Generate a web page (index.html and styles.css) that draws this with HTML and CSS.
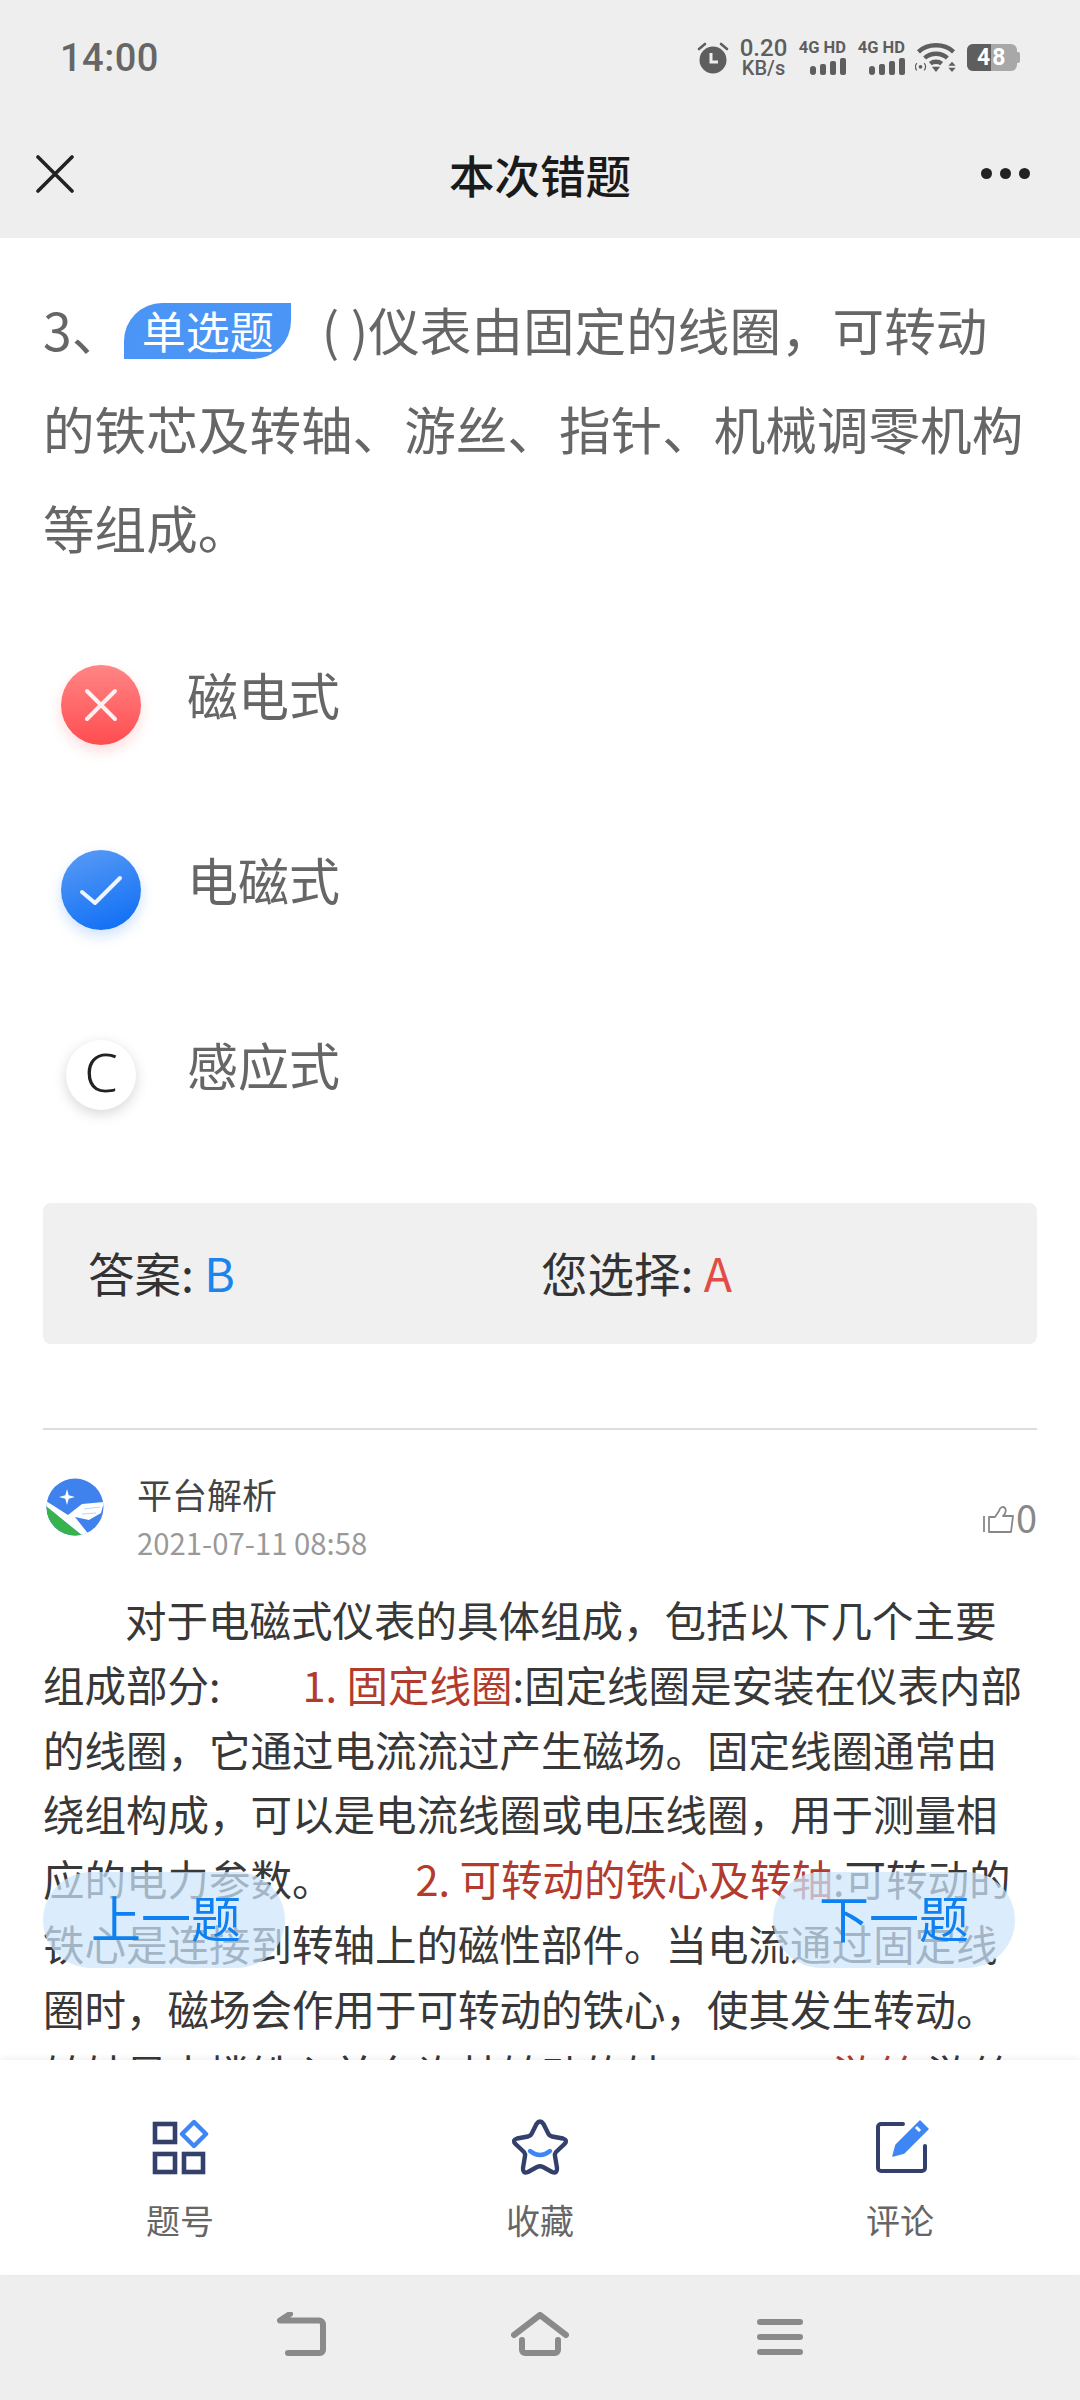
FILE: index.html
```html
<!DOCTYPE html>
<html lang="zh">
<head>
<meta charset="utf-8">
<title>本次错题</title>
<link rel="stylesheet" href="styles.css">
</head>
<body>
<div class="phone">
  <div class="status">
    <span class="time">14:00</span>
    <div class="status-right">
      <svg class="alarm" width="32" height="32" viewBox="0 0 32 32"><path d="M2 7l6-5M30 7l-6-5" stroke="#5e5e5e" stroke-width="2.6" stroke-linecap="round"/><circle cx="16" cy="18" r="13.5" fill="#5e5e5e"/><path d="M14 11v9h7" fill="none" stroke="#eee" stroke-width="3"/></svg>
      <div class="speed"><span>0.20</span><span class="kb">KB/s</span></div>
      <div class="net"><span>4G HD</span><svg width="36" height="17" viewBox="0 0 36 17"><rect x="0" y="8" width="6" height="9" rx="3" fill="#5e5e5e"/><rect x="10" y="6" width="6" height="11" rx="2" fill="#5e5e5e"/><rect x="20" y="3" width="6" height="14" rx="2" fill="#5e5e5e"/><rect x="30" y="0" width="6" height="17" rx="2" fill="#5e5e5e"/></svg></div>
      <div class="net"><span>4G HD</span><svg width="36" height="17" viewBox="0 0 36 17"><rect x="0" y="8" width="6" height="9" rx="3" fill="#5e5e5e"/><rect x="10" y="6" width="6" height="11" rx="2" fill="#5e5e5e"/><rect x="20" y="3" width="6" height="14" rx="2" fill="#5e5e5e"/><rect x="30" y="0" width="6" height="17" rx="2" fill="#5e5e5e"/></svg></div>
      <svg class="wifi" width="42" height="31" viewBox="0 0 40 30"><g fill="none" stroke="#5e5e5e" stroke-width="4.2"><path d="M3 9.5C12 1 28 1 37 9.5"/><path d="M9 15.5C15 10 25 10 31 15.5"/><path d="M14.5 21C17.5 18.5 22.5 18.5 25.5 21"/></g><path d="M16 24h8l-4 5z" fill="#5e5e5e"/><path d="M32 23l3.5-4 3.500 4zM32 25h7l-3.500 4z" fill="#5e5e5e"/><circle cx="5" cy="24" r="1.8" fill="#5e5e5e"/><path d="M1.500 20.500a5 5 0 0 0 0 7M8.500 20.500a5 5 0 0 1 0 7" fill="none" stroke="#5e5e5e" stroke-width="1.2"/></svg>
      <div class="battery"><span class="battery-fill"></span><span class="battery-num">48</span></div>
    </div>
  </div>
  <header class="topbar">
    <svg class="close" width="38" height="38" viewBox="0 0 38 38"><path d="M2 2l34 34M36 2L2 36" stroke="#222" stroke-width="3.6" stroke-linecap="round"/></svg>
    <h1 class="title">本次错题</h1>
    <div class="dots"><i></i><i></i><i></i></div>
  </header>
  <main class="content">
    <p class="question">3、<span class="tag">单选题</span> ( )仪表由固定的线圈，可转动的铁芯及转轴、游丝、指针、机械调零机构等组成。</p>
    <ul class="options">
      <li class="option"><span class="mark wrong"><svg width="36" height="36" viewBox="0 0 36 36"><path d="M4 4l28 28M32 4L4 32" stroke="#fff" stroke-opacity=".9" stroke-width="4" stroke-linecap="round"/></svg></span><span>磁电式</span></li>
      <li class="option"><span class="mark right"><svg width="44" height="34" viewBox="0 0 44 34"><path d="M3 19l13 11L41 5" fill="none" stroke="#fff" stroke-opacity=".92" stroke-width="4" stroke-linecap="round" stroke-linejoin="round"/></svg></span><span>电磁式</span></li>
      <li class="option"><span class="mark plain">C</span><span>感应式</span></li>
    </ul>
    <div class="answer">
      <div class="answer-cell">答案: <b class="blue">B</b></div>
      <div class="answer-cell">您选择: <b class="red">A</b></div>
    </div>
    <hr class="rule">
    <div class="author">
      <svg class="logo" width="58" height="58" viewBox="0 0 58 58"><defs><clipPath id="logo-clip"><circle cx="29" cy="29" r="28.5"/></clipPath></defs><g clip-path="url(#logo-clip)"><rect width="58" height="58" fill="#3f82ee"/><path d="M0 28L37 58H0z" fill="#38b24d"/><path d="M0 23L22 37 36 26 58 24 55 35 43 42 29 39 44 58H37L0 28z" fill="#fff"/><path d="M38 31L54 29M36 36L50 35" stroke="#bcd4f8" stroke-width="1"/></g><path d="M21 11l1.700 6.300L29 19l-6.300 1.700L21 27l-1.700-6.300L13 19l6.300-1.700z" fill="#fff"/></svg>
      <div class="author-text">
        <div class="author-name">平台解析</div>
        <div class="author-date">2021-07-11 08:58</div>
      </div>
      <div class="like">
        <svg width="31" height="28" viewBox="0 0 31 28"><path d="M1 10v16M6 26V11h6l4-6c1-4 4-5 6-3 1.500 2 .5 6-2 8h10l-2 16z" fill="none" stroke="#888" stroke-width="1.8" stroke-linejoin="round"/></svg><span>0</span>
      </div>
    </div>
    <div class="analysis"><span class="gap"></span>对于电磁式仪表的具体组成，包括以下几个主要组成部分:<span class="gap"></span><em>1. 固定线圈</em>:固定线圈是安装在仪表内部的线圈，它通过电流流过产生磁场。固定线圈通常由绕组构成，可以是电流线圈或电压线圈，用于测量相应的电力参数。<span class="gap"></span><em>2. 可转动的铁心及转轴</em>:可转动的铁心是连接到转轴上的磁性部件。当电流通过固定线圈时，磁场会作用于可转动的铁心，使其发生转动。转轴是支撑铁心并允许其转动的轴。<span class="gap"></span><em>3. 游丝</em>:游丝</div>
    <button class="float prev">上一题</button>
    <button class="float next">下一题</button>
  </main>
  <nav class="tabs">
    <div class="tab">
      <svg width="58" height="58" viewBox="0 0 58 58"><g fill="none" stroke="#33406b" stroke-width="4.6"><rect x="4" y="6" width="20" height="18"/><rect x="4" y="36" width="20" height="18"/><rect x="33" y="36" width="19" height="18"/></g><path d="M43 4l12 12-12 12-12-12z" fill="none" stroke="#3f86f5" stroke-width="4.4" stroke-linejoin="round"/></svg>
      <span>题号</span>
    </div>
    <div class="tab">
      <svg width="60" height="58" viewBox="0 0 60 58"><path d="M26.500 6Q30 1 33.500 6L38.500 16Q39.500 18 42 18.500L53 20.500Q58 22 54.500 26L46 34Q44.500 36 45 38L47 50Q47.500 56 42 54L33 49Q30 47.500 27 49L18 54Q12.500 56 13 50L15 38Q15.500 36 14 34L5.500 26Q2 22 7 20.500L18 18.500Q20.500 18 21.500 16Z" fill="none" stroke="#33406b" stroke-width="4.4" stroke-linejoin="round"/><path d="M20 33Q30 41 40 33" fill="none" stroke="#3f86f5" stroke-width="4.4" stroke-linecap="round"/></svg>
      <span>收藏</span>
    </div>
    <div class="tab">
      <svg width="58" height="58" viewBox="0 0 58 58"><path d="M32 6H10a3 3 0 0 0-3 3v41a3 3 0 0 0 3 3h41a3 3 0 0 0 3-3V28" fill="none" stroke="#33406b" stroke-width="4" stroke-linecap="round"/><path d="M22 38L25 27 49 3 57 11 33 35z" fill="#3f86f5" stroke="#3f86f5" stroke-width="1.5" stroke-linejoin="round"/><path d="M45 9l4 4" stroke="#fff" stroke-width="3"/></svg>
      <span>评论</span>
    </div>
  </nav>
  <footer class="sysnav">
    <svg width="50" height="44" viewBox="0 0 50 44"><path d="M13 2L3 8.500h39a4 4 0 0 1 4 4V38a3 3 0 0 1-3 3H11" fill="none" stroke="#8a8a8a" stroke-width="6" stroke-linecap="round" stroke-linejoin="round"/></svg>
    <svg class="home" width="58" height="44" viewBox="0 0 58 44"><path d="M3 23L29 3l26 20" fill="none" stroke="#8a8a8a" stroke-width="6" stroke-linecap="round" stroke-linejoin="round"/><path d="M11 28v10a3 3 0 0 0 3 3h30a3 3 0 0 0 3-3V28" fill="none" stroke="#8a8a8a" stroke-width="6" stroke-linecap="round"/></svg>
    <svg class="menu" width="46" height="36" viewBox="0 0 46 36"><path d="M3 3h40M3 18h40M3 33h40" stroke="#8a8a8a" stroke-width="6" stroke-linecap="round"/></svg>
  </footer>
</div>
</body>
</html>
```
FILE: styles.css
```css
* { box-sizing: border-box; }
html, body { margin: 0; padding: 0; }
body { background: #fff; font-family: "Noto Sans CJK SC", "Noto Sans", sans-serif; }
.phone { width: 1080px; height: 2400px; display: flex; flex-direction: column; overflow: hidden; position: relative; }

.status { height: 115px; flex: none; background: #eeeeee; display: flex; justify-content: space-between; align-items: center; padding: 0 60px 0 60px; }
.time { font: 500 38px/1 Roboto, sans-serif; color: #666; letter-spacing: .5px; }
.status-right { display: flex; align-items: center; gap: 11px; color: #5e5e5e; }
.speed { display: flex; flex-direction: column; align-items: center; width: 47px; font: 500 24px/20px Roboto, sans-serif; }
.speed .kb { font-size: 20px; line-height: 20px; }
.net { display: flex; flex-direction: column; align-items: flex-end; width: 48px; gap: 3px; font: 700 16.5px/14px Roboto, sans-serif; white-space: nowrap; }
.wifi { margin: 0 -1px; }
.battery { width: 50px; height: 27px; margin-right: 3px; border-radius: 6px; background: #a8a8a8; position: relative; }
.battery::after { content: ""; position: absolute; right: -3px; top: 8px; width: 3px; height: 11px; background: #a8a8a8; border-radius: 0 2px 2px 0; }
.battery-fill { position: absolute; left: 0; top: 0; bottom: 0; width: 24px; background: #5e5e5e; border-radius: 6px 0 0 6px; }
.battery-num { position: absolute; left: 10px; top: 2px; font: 700 23px/23px Roboto, sans-serif; letter-spacing: 2px; color: #fff; }

.topbar { height: 123px; flex: none; background: #eeeeee; display: flex; align-items: center; justify-content: space-between; padding: 0 50px 6px 36px; position: relative; }
.title { margin: 0; font-size: 45.5px; font-weight: 500; color: #1a1a1a; position: absolute; left: 0; right: 0; text-align: center; line-height: 60px; }
.dots { display: flex; gap: 8px; }
.dots i { width: 11px; height: 11px; border-radius: 50%; background: #222; }

.content { flex: 1; min-height: 0; padding: 41px 43px 0; position: relative; overflow: hidden; background: #fff; }
.question { margin: 0; font-size: 51.6px; line-height: 99px; color: #666; }
.tag { display: inline-block; vertical-align: 2px; width: 167px; height: 56px; line-height: 54px; text-align: center; font-size: 44px; color: #fff; background: #4a95f5; border-radius: 38px 0 38px 0; margin: 0 19px 0 1px; }

.options { list-style: none; margin: 25px 0 0; padding: 0; }
.option { height: 185px; display: flex; align-items: center; gap: 46px; font-size: 51px; color: #666; padding-left: 18px; }
.mark { width: 80px; height: 80px; border-radius: 50%; flex: none; display: flex; align-items: center; justify-content: center; position: relative; top: 11px; }
.wrong { background: linear-gradient(180deg, #ff8585, #ff4d50); box-shadow: 0 6px 14px rgba(255, 77, 80, .2); }
.right { background: linear-gradient(160deg, #5b9cf6, #0a6cf5); box-shadow: 0 6px 14px rgba(10, 108, 245, .2); }
.plain { width: 70px; height: 70px; margin: 0 5px; padding-bottom: 8px; background: #fff; font: 300 54px/1 "Noto Sans", sans-serif; color: #222; box-shadow: 0 4px 14px rgba(0, 0, 0, .16); }

.answer { margin-top: 47px; height: 141px; padding-bottom: 5px; background: #f0f0f0; border-radius: 8px; display: grid; grid-template-columns: 453px 1fr; align-items: center; padding-left: 45px; font-size: 46.5px; color: #333; }
.answer b { font-weight: 400; }
.blue { color: #1a85ef; }
.red { color: #e14c46; }

.rule { border: 0; height: 2px; background: #ddd; margin: 84px 0 0; }
.author { display: flex; align-items: center; margin-top: 41px; position: relative; }
.logo { margin-left: 3px; flex: none; position: relative; top: -10px; }
.author-text { margin-left: 33px; flex: 1; }
.author-name { font-size: 35px; line-height: 46px; color: #444; }
.author-date { font-size: 29.3px; line-height: 40px; margin-top: 5px; color: #999; }
.like { display: flex; align-items: flex-end; font-size: 38px; line-height: 34px; color: #888; gap: 2px; }

.analysis { margin-top: 25px; font-size: 41.5px; line-height: 64.8px; color: #383838; }
.gap { display: inline-block; width: 82px; }
.analysis em { font-style: normal; color: #b33b2e; }

.float { position: absolute; top: 1634px; width: 242px; height: 96px; border: 0; border-radius: 48px; background: rgba(205, 230, 252, .72); color: #0f80f0; font: 400 50px/88px "Noto Sans CJK SC", sans-serif; padding: 0 0 8px; }
.prev { left: 43px; padding-left: 4px; }
.next { left: 773px; }

.tabs { height: 215px; flex: none; background: #fff; display: grid; grid-template-columns: repeat(3, 1fr); box-shadow: 0 -2px 6px rgba(0, 0, 0, .06); position: relative; }
.tab { display: flex; flex-direction: column; align-items: center; padding-top: 58px; gap: 21px; font-size: 34px; line-height: 46px; color: #666; }
.sysnav { height: 125px; flex: none; background: #eeeeee; display: flex; justify-content: center; align-items: flex-start; gap: 186px; padding-top: 37px; }
.home { position: relative; left: -2px; }
.menu { margin-top: 7px; }
```
